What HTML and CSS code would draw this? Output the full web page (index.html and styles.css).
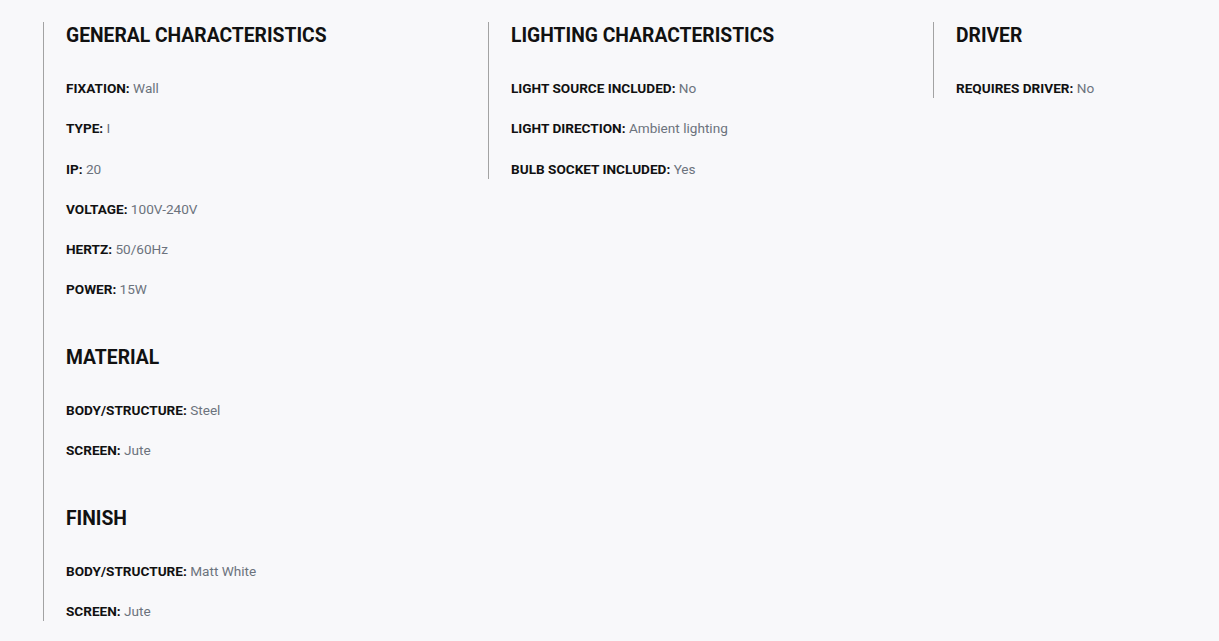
FILE: index.html
```html
<!DOCTYPE html>
<html lang="en">
<head>
<meta charset="utf-8">
<title>Specifications</title>
<link rel="stylesheet" href="styles.css">
</head>
<body>
<div class="specs">
  <div class="col">
    <section class="group">
      <h3 class="group-title">GENERAL CHARACTERISTICS</h3>
      <p class="row"><strong>FIXATION:</strong> <span class="val">Wall</span></p>
      <p class="row"><strong>TYPE:</strong> <span class="val">I</span></p>
      <p class="row"><strong>IP:</strong> <span class="val">20</span></p>
      <p class="row"><strong>VOLTAGE:</strong> <span class="val">100V-240V</span></p>
      <p class="row"><strong>HERTZ:</strong> <span class="val">50/60Hz</span></p>
      <p class="row"><strong>POWER:</strong> <span class="val">15W</span></p>
    </section>
    <section class="group">
      <h3 class="group-title">MATERIAL</h3>
      <p class="row"><strong>BODY/STRUCTURE:</strong> <span class="val">Steel</span></p>
      <p class="row"><strong>SCREEN:</strong> <span class="val">Jute</span></p>
    </section>
    <section class="group">
      <h3 class="group-title">FINISH</h3>
      <p class="row"><strong>BODY/STRUCTURE:</strong> <span class="val">Matt White</span></p>
      <p class="row"><strong>SCREEN:</strong> <span class="val">Jute</span></p>
    </section>
  </div>
  <div class="col">
    <section class="group">
      <h3 class="group-title">LIGHTING CHARACTERISTICS</h3>
      <p class="row"><strong>LIGHT SOURCE INCLUDED:</strong> <span class="val">No</span></p>
      <p class="row"><strong>LIGHT DIRECTION:</strong> <span class="val">Ambient lighting</span></p>
      <p class="row"><strong>BULB SOCKET INCLUDED:</strong> <span class="val">Yes</span></p>
    </section>
  </div>
  <div class="col">
    <section class="group">
      <h3 class="group-title">DRIVER</h3>
      <p class="row"><strong>REQUIRES DRIVER:</strong> <span class="val">No</span></p>
    </section>
  </div>
</div>
</body>
</html>
```

FILE: styles.css
```css
html, body {
  margin: 0;
  padding: 0;
}
body {
  background: #f8f8fa;
  font-family: Roboto, "Liberation Sans", Arial, sans-serif;
  color: #111;
}
.specs {
  display: grid;
  grid-template-columns: 445px 445px 1fr;
  align-items: start;
  padding: 22px 0 0 43px;
}
.col {
  border-left: 1px solid #a3a3a3;
  padding-left: 22px;
}
.group + .group {
  margin-top: 44.6px;
}
.group-title {
  margin: 0 0 29px;
  padding-top: 1px;
  font-size: 19.3px;
  line-height: 26px;
  font-weight: 700;
  color: #111;
}
.row {
  margin: 0 0 20.3px;
  font-size: 13.6px;
  line-height: 20px;
}
.row:last-child {
  margin-bottom: 0;
}
.row strong {
  font-weight: 700;
  color: #111;
}
.val {
  color: #6c737d;
}
```
